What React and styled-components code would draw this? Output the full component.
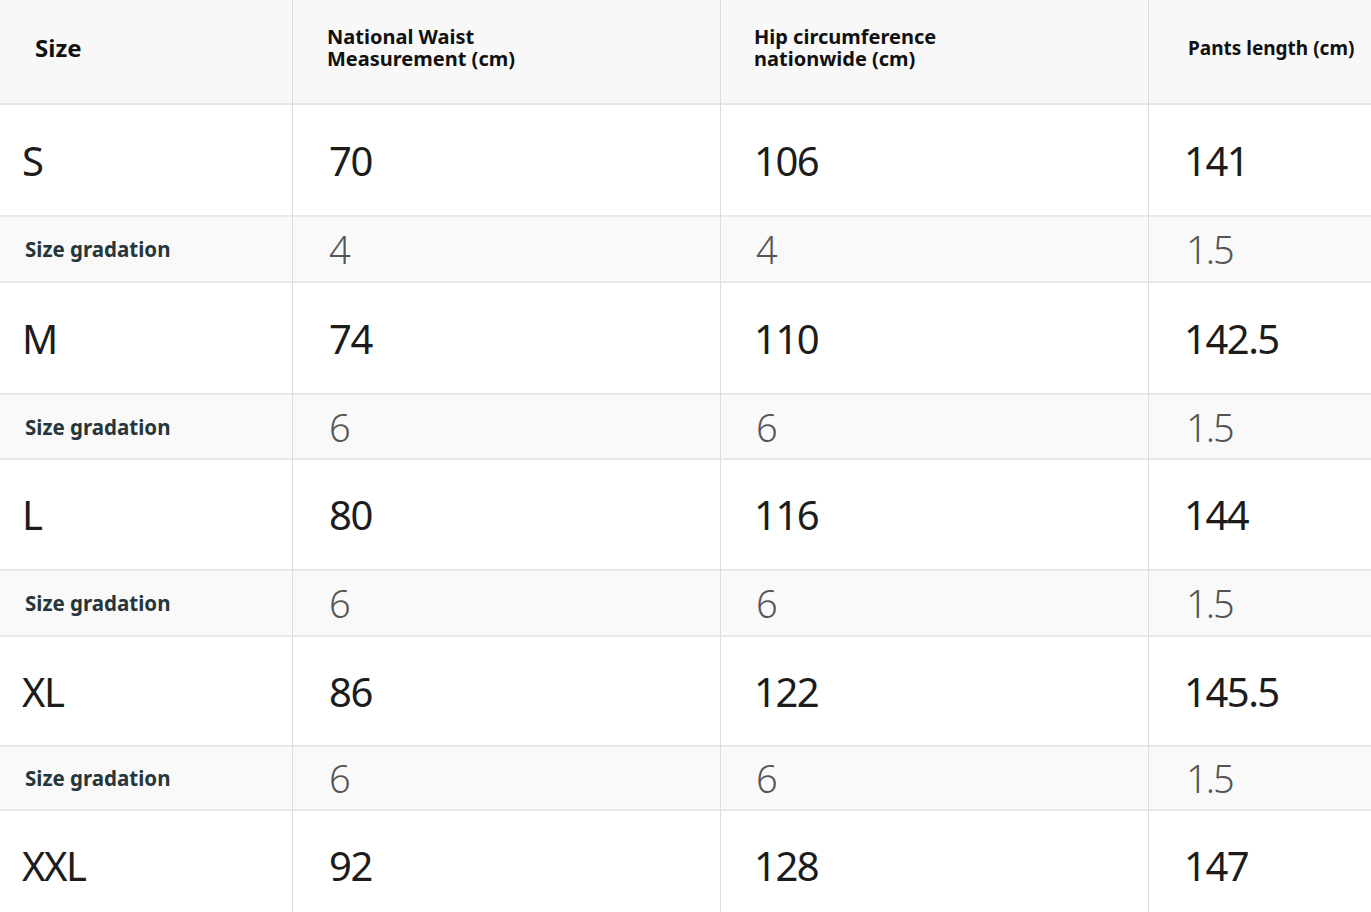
import React from "react";
import styled, { createGlobalStyle } from "styled-components";

const Global = createGlobalStyle`
  html, body { margin: 0; padding: 0; background: #ffffff; }
  body { font-family: "Noto Sans", "Open Sans", sans-serif; overflow: hidden; }
`;

const Table = styled.div`
  display: grid;
  grid-template-columns: 293px 428px 428px 1fr;
  grid-template-rows: 105px 112px 66px 112px 65px 111px 66px 110px 64px 110px;
  width: 1371px;
  height: 912px;
  overflow: hidden;
  background: #fff;
`;

const Cell = styled.div`
  display: flex;
  align-items: center;
  box-sizing: border-box;
  border-bottom: 2px solid ${(p) => (p.$kind === "head" ? "#e6e6e6" : "#e8e8e8")};
  border-right: ${(p) => (p.$last ? "none" : "1px solid #dcdcdc")};
  background: ${(p) =>
    p.$kind === "head" ? "#f8f8f8" : p.$kind === "grad" ? "#f9f9f9" : "#ffffff"};
  padding-left: ${(p) => p.$pad}px;
  padding-bottom: ${(p) => (p.$kind === "head" ? 7 : 0)}px;
`;

const HeadText = styled.span`
  font-family: "Noto Sans", sans-serif;
  font-weight: 700;
  font-size: ${(p) => p.$size || 20}px;
  line-height: 22px;
  color: #111;
`;

const ValueText = styled.span`
  font-family: "Noto Sans", "Open Sans", sans-serif;
  font-weight: 400;
  font-size: 40px;
  color: #1c1c1c;
  letter-spacing: -1.5px;
`;

const GradLabel = styled.span`
  font-family: "Noto Sans", sans-serif;
  font-weight: 700;
  font-size: 20.5px;
  color: #26363a;
`;

const GradValue = styled.span`
  font-family: "Noto Sans", "Open Sans", sans-serif;
  font-weight: 300;
  font-size: 38px;
  color: #555;
  letter-spacing: -2px;
`;

const headers = [
  { text: "Size", pad: 35, size: 24 },
  { text: ["National Waist", "Measurement (cm)"], pad: 34 },
  { text: ["Hip circumference", "nationwide (cm)"], pad: 33 },
  { text: "Pants length (cm)", pad: 39, size: 19 },
];

const rows = [
  { kind: "main", vals: ["S", "70", "106", "141"] },
  { kind: "grad", vals: ["Size gradation", "4", "4", "1.5"] },
  { kind: "main", vals: ["M", "74", "110", "142.5"] },
  { kind: "grad", vals: ["Size gradation", "6", "6", "1.5"] },
  { kind: "main", vals: ["L", "80", "116", "144"] },
  { kind: "grad", vals: ["Size gradation", "6", "6", "1.5"] },
  { kind: "main", vals: ["XL", "86", "122", "145.5"] },
  { kind: "grad", vals: ["Size gradation", "6", "6", "1.5"] },
  { kind: "main", vals: ["XXL", "92", "128", "147"] },
];

const mainPads = [22, 36, 33, 35];
const gradPads = [25, 36, 35, 37];

export default function App() {
  return (
    <>
      <Global />
      <Table>
        {headers.map((h, i) => (
          <Cell key={"h" + i} $kind="head" $pad={h.pad} $last={i === 3}>
            <HeadText $size={h.size}>
              {Array.isArray(h.text) ? (
                <>
                  {h.text[0]}
                  <br />
                  {h.text[1]}
                </>
              ) : (
                h.text
              )}
            </HeadText>
          </Cell>
        ))}
        {rows.map((r, ri) =>
          r.vals.map((v, ci) => (
            <Cell
              key={ri + "-" + ci}
              $kind={r.kind}
              $pad={r.kind === "grad" ? gradPads[ci] : mainPads[ci]}
              $last={ci === 3}
            >
              {r.kind === "grad" ? (
                ci === 0 ? <GradLabel>{v}</GradLabel> : <GradValue>{v}</GradValue>
              ) : (
                <ValueText>{v}</ValueText>
              )}
            </Cell>
          ))
        )}
      </Table>
    </>
  );
}
